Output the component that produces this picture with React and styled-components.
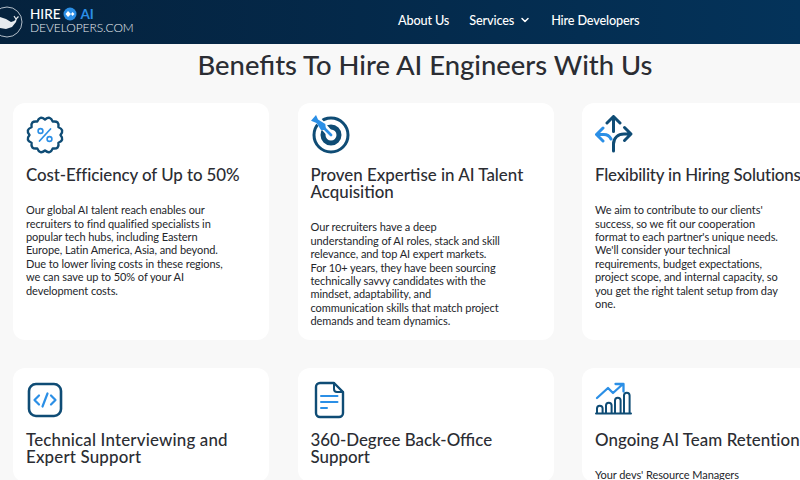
import React from "react";
import styled, { createGlobalStyle } from "styled-components";
import { ChevronDown } from "lucide-react";

const GlobalStyle = createGlobalStyle`
  html, body {
    margin: 0;
    padding: 0;
    height: 480px;
    overflow: hidden;
    background: #f8f8f8;
    font-family: "Lato", "Liberation Sans", sans-serif;
  }
`;

const Page = styled.div`
  width: 800px;
  height: 480px;
  overflow: hidden;
`;

const Header = styled.header`
  height: 44px;
  display: flex;
  align-items: center;
  background: linear-gradient(90deg, #05223d 0%, #04294a 45%, #04335a 100%);
  color: #fff;
`;

const Logo = styled.div`
  display: flex;
  align-items: center;
  gap: 7px;
  width: 398px;
  flex: none;
`;

const LogoText = styled.div`
  display: flex;
  flex-direction: column;
  margin-top: -2px;
  line-height: 14px;
  color: #e8edf2;
`;

const LogoTop = styled.div`
  display: flex;
  align-items: center;
  gap: 3px;
  font-size: 13.5px;
  font-weight: 500;
  color: #fff;
`;

const LogoAi = styled.span`
  font-weight: 700;
  color: #2b8fe6;
`;

const LogoBottom = styled.span`
  font-size: 12px;
  font-weight: 300;
  letter-spacing: -0.05px;
`;

const Nav = styled.nav`
  display: flex;
  align-items: center;
  gap: 20px;
  margin-top: -4px;
  font-size: 12.7px;
  font-weight: 500;
  letter-spacing: -0.15px;
`;

const NavItem = styled.a`
  display: flex;
  align-items: center;
  gap: 5px;
  color: #fff;
`;

const Title = styled.h1`
  margin: 0;
  padding-left: 50px;
  height: 41px;
  line-height: 41px;
  text-align: center;
  font-size: 27.4px;
  font-weight: 500;
  color: #2b2d33;
`;

const Grid = styled.div`
  display: grid;
  grid-template-columns: repeat(3, 256px);
  grid-template-rows: 237px auto;
  column-gap: 28.5px;
  row-gap: 28px;
  margin: 18px 0 0 13px;
`;

const Card = styled.article`
  background: #fff;
  border-radius: 12px;
  padding: 12px 14px 0 13px;
  box-sizing: border-box;
`;

const IconBox = styled.div`
  width: 40px;
  height: 40px;
  margin-bottom: 10.5px;
`;

const CardTitle = styled.h3`
  margin: 0;
  font-size: 16.9px;
  line-height: 17.2px;
  font-weight: 500;
  letter-spacing: ${(p) => p.$spacing || 0}px;
  color: #2b2d33;
  white-space: ${(p) => (p.$nowrap ? "nowrap" : "normal")};
`;

const CardText = styled.p`
  margin: 20.5px 0 0;
  font-size: 11px;
  line-height: 13.4px;
  letter-spacing: -0.08px;
  color: #24262b;
  white-space: pre-line;
`;

const DARK = "#0f4c75";
const BLUE = "#2b8fe6";

const WhaleLogo = () => (
  <svg width="23" height="40" viewBox="0 0 23 40" fill="none">
    <circle cx="7" cy="20" r="15" stroke="#dfe6ec" strokeWidth="0.8" />
    <path d="M0 15 L6 17 L11 20 L14 19 L17 16 L16 20 L12 25 L6 27 L0 26 Z" fill="#e6eaee" />
    <path d="M14 14 L16 17 L18.5 14.5" stroke="#e6eaee" strokeWidth="1.2" />
  </svg>
);

const LogoDot = () => (
  <svg width="14" height="14" viewBox="0 0 14 14">
    <circle cx="7" cy="7" r="6.5" fill={BLUE} />
    <path d="M5 4 L8 7 L5 10 L2.5 7 Z M9.5 5 L11.5 7 L9.5 9 L8 7 Z" fill="#fff" />
  </svg>
);

const BadgeIcon = () => {
  // scalloped seal outline
  const n = 12;
  let d = "";
  for (let i = 0; i < n; i++) {
    const a1 = (i / n) * Math.PI * 2;
    const a2 = ((i + 0.5) / n) * Math.PI * 2;
    const a3 = ((i + 1) / n) * Math.PI * 2;
    const p1 = [19 + 15.5 * Math.cos(a1), 20 + 15.5 * Math.sin(a1)];
    const c = [19 + 20.5 * Math.cos(a2), 20 + 20.5 * Math.sin(a2)];
    const p2 = [19 + 15.5 * Math.cos(a3), 20 + 15.5 * Math.sin(a3)];
    if (i === 0) d += `M${p1[0].toFixed(2)} ${p1[1].toFixed(2)}`;
    d += `Q${c[0].toFixed(2)} ${c[1].toFixed(2)} ${p2[0].toFixed(2)} ${p2[1].toFixed(2)}`;
  }
  return (
    <svg width="40" height="40" viewBox="0 0 40 40" fill="none">
      <path d={d + "Z"} stroke={DARK} strokeWidth="2.4" strokeLinejoin="round" />
      <path d="M13.5 26 L24.5 14" stroke={BLUE} strokeWidth="1.7" strokeLinecap="round" />
      <circle cx="14.5" cy="16" r="2.4" stroke={BLUE} strokeWidth="1.6" />
      <circle cx="23.5" cy="24" r="2.4" stroke={BLUE} strokeWidth="1.6" />
    </svg>
  );
};

const TargetIcon = () => (
  <svg width="40" height="40" viewBox="0 0 40 40" fill="none">
    <circle cx="20" cy="20" r="17" stroke={DARK} strokeWidth="3" />
    <circle cx="20" cy="20" r="8" stroke={DARK} strokeWidth="5" />
    <path d="M6 4 L20 20" stroke="#fff" strokeWidth="7" />
    <path d="M8 8 L20 20" stroke={BLUE} strokeWidth="2.8" strokeLinecap="round" />
    <path d="M0 5.7 L5 0 L7 4.5 L14.3 9 L15 15 L10 15 L5.5 8 Z" fill={BLUE} />
  </svg>
);

const SplitIcon = () => (
  <svg width="40" height="40" viewBox="0 0 40 40" fill="none" strokeWidth="3" strokeLinecap="round" strokeLinejoin="round">
    <path d="M18.5 16.5 V1.5 M12 8 L18.5 1.5 L25 8" stroke={DARK} />
    <path d="M18.5 36 V29 C18.5 23 23 19 29 19 H35.5 M29.5 12.5 L36 19 L29.5 25.5" stroke={DARK} />
    <path d="M16 24 C14.5 21 12 19.5 9 19.5 H2 M8 13 L1.5 19.5 L8 26" stroke={BLUE} />
  </svg>
);

const CodeIcon = () => (
  <svg width="40" height="40" viewBox="0 0 40 40" fill="none" strokeLinecap="round" strokeLinejoin="round">
    <rect x="3" y="4" width="32" height="32" rx="7" stroke={DARK} strokeWidth="2.6" />
    <path d="M13 15.5 L8.5 20 L13 24.5 M25 15.5 L29.5 20 L25 24.5 M21.5 13.5 L16.5 26.5" stroke={BLUE} strokeWidth="2.2" />
  </svg>
);

const DocIcon = () => (
  <svg width="40" height="40" viewBox="0 0 40 40" fill="none" strokeLinecap="round" strokeLinejoin="round">
    <path d="M9 3 H23 L32 12 V33 A4 4 0 0 1 28 37 H9 A4 4 0 0 1 5 33 V7 A4 4 0 0 1 9 3 Z" stroke={DARK} strokeWidth="2.4" />
    <path d="M23 3 V9 A3 3 0 0 0 26 12 H32" stroke={DARK} strokeWidth="2" />
    <path d="M10 16 H26.5 M10 22 H26.5 M10 28 H16" stroke={BLUE} strokeWidth="2" />
  </svg>
);

const ChartIcon = () => (
  <svg width="40" height="40" viewBox="0 0 40 40" fill="none" strokeLinecap="round" strokeLinejoin="round">
    <path d="M2 18 L13 8 L18 13 L28 4 M20.5 4 H28.5 V11.5" stroke={BLUE} strokeWidth="2.3" />
    <path d="M1 33.5 H36" stroke={DARK} strokeWidth="2" />
    <path d="M2 33 V28.5 A2.8 2.8 0 0 1 7.6 28.5 V33 M11 33 V25.5 A2.8 2.8 0 0 1 16.6 25.5 V33 M20 33 V20.5 A2.8 2.8 0 0 1 25.6 20.5 V33 M29 33 V15.5 A2.8 2.8 0 0 1 34.6 15.5 V33" stroke={DARK} strokeWidth="2" />
  </svg>
);

const cards = [
  {
    icon: <BadgeIcon />,
    title: "Cost-Efficiency of Up to 50%",
    spacing: -0.07,
    text: "Our global AI talent reach enables our\nrecruiters to find qualified specialists in\npopular tech hubs, including Eastern\nEurope, Latin America, Asia, and beyond.\nDue to lower living costs in these regions,\nwe can save up to 50% of your AI\ndevelopment costs.",
  },
  {
    icon: <TargetIcon />,
    title: "Proven Expertise in AI Talent Acquisition",
    text: "Our recruiters have a deep\nunderstanding of AI roles, stack and skill\nrelevance, and top AI expert markets.\nFor 10+ years, they have been sourcing\ntechnically savvy candidates with the\nmindset, adaptability, and\ncommunication skills that match project\ndemands and team dynamics.",
  },
  {
    icon: <SplitIcon />,
    title: "Flexibility in Hiring Solutions",
    nowrap: true,
    spacing: -0.2,
    text: "We aim to contribute to our clients'\nsuccess, so we fit our cooperation\nformat to each partner's unique needs.\nWe'll consider your technical\nrequirements, budget expectations,\nproject scope, and internal capacity, so\nyou get the right talent setup from day\none.",
  },
  {
    icon: <CodeIcon />,
    title: "Technical Interviewing and Expert Support",
    spacing: 0.18,
  },
  {
    icon: <DocIcon />,
    title: "360-Degree Back-Office Support",
  },
  {
    icon: <ChartIcon />,
    title: "Ongoing AI Team Retention",
    nowrap: true,
    spacing: 0.05,
    text: "Your devs' Resource Managers",
  },
];

export default function App() {
  return (
    <Page>
      <GlobalStyle />
      <Header>
        <Logo>
          <WhaleLogo />
          <LogoText>
            <LogoTop>
              <span>HIRE</span>
              <LogoDot />
              <LogoAi>AI</LogoAi>
            </LogoTop>
            <LogoBottom>DEVELOPERS.COM</LogoBottom>
          </LogoText>
        </Logo>
        <Nav>
          <NavItem>About Us</NavItem>
          <NavItem>
            Services <ChevronDown size={12} strokeWidth={3} />
          </NavItem>
          <NavItem>Hire Developers</NavItem>
        </Nav>
      </Header>
      <Title>Benefits To Hire AI Engineers With Us</Title>
      <Grid>
        {cards.map((card) => (
          <Card key={card.title}>
            <IconBox>{card.icon}</IconBox>
            <CardTitle $nowrap={card.nowrap} $spacing={card.spacing}>
              {card.title}
            </CardTitle>
            {card.text && <CardText>{card.text}</CardText>}
          </Card>
        ))}
      </Grid>
    </Page>
  );
}
